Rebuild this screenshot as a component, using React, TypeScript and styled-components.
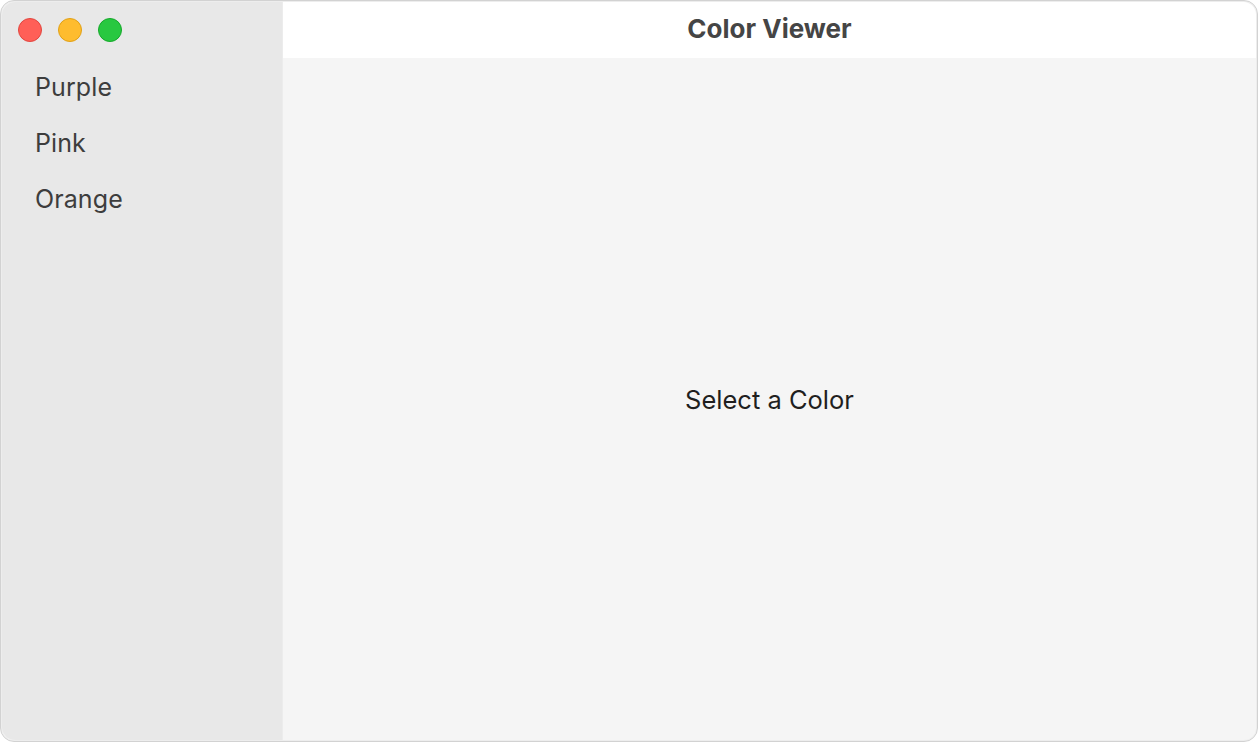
import React from "react";
import styled, { createGlobalStyle } from "styled-components";

const Global = createGlobalStyle`
  html, body { margin: 0; padding: 0; background: #ffffff; }
  body { font-family: Inter, "Noto Sans", sans-serif; }
`;

const Window = styled.div`
  width: 1258px;
  height: 742px;
  box-sizing: border-box;
  border: 1px solid #d2d2d2;
  border-radius: 14px;
  overflow: hidden;
  display: flex;
  background: #f5f5f5;
  box-shadow: inset 0 0 0 1px #ededed;
`;

const Sidebar = styled.aside`
  width: 280px;
  flex: none;
  background: #e8e8e8;
  border-right: 1px solid #ececec;
  display: flex;
  flex-direction: column;
  margin: 1px 0 1px 1px;
  border-radius: 13px 0 0 13px;
`;

const TrafficLights = styled.div`
  display: flex;
  gap: 16px;
  padding: 16px 0 0 16px;
  height: 40px;
  box-sizing: border-box;
`;

const Light = styled.span<{ $fill: string; $ring: string }>`
  width: 24px;
  height: 24px;
  border-radius: 50%;
  background: ${(p) => p.$fill};
  box-sizing: border-box;
  border: 1px solid ${(p) => p.$ring};
`;

const NavList = styled.ul`
  list-style: none;
  margin: 0;
  padding: 17px 0 0 0;
  display: flex;
  flex-direction: column;
`;

const NavItem = styled.li`
  height: 56px;
  display: flex;
  align-items: center;
  padding-left: 33px;
  font-size: 25px;
  letter-spacing: 0.1px;
  color: #3d3d3d;
`;

const Main = styled.main`
  flex: 1;
  display: flex;
  flex-direction: column;
  margin: 1px 1px 1px 0;
`;

const TitleBar = styled.header`
  height: 56px;
  flex: none;
  background: #ffffff;
  display: flex;
  align-items: center;
  justify-content: center;
  font-weight: 700;
  font-size: 26px;
  color: #454545;
  padding-bottom: 3px;
  box-sizing: border-box;
  border-top-right-radius: 13px;
`;

const Content = styled.section`
  flex: 1;
  display: flex;
  align-items: center;
  justify-content: center;
  font-size: 25.5px;
  color: #1f1f1f;
  padding-top: 1px;
`;

export default function App() {
  return (
    <>
      <Global />
      <Window>
        <Sidebar>
          <TrafficLights>
            <Light $fill="#ff5f57" $ring="#e2463f" />
            <Light $fill="#febc2e" $ring="#e1a116" />
            <Light $fill="#28c840" $ring="#15a92a" />
          </TrafficLights>
          <NavList>
            <NavItem>Purple</NavItem>
            <NavItem>Pink</NavItem>
            <NavItem>Orange</NavItem>
          </NavList>
        </Sidebar>
        <Main>
          <TitleBar>Color Viewer</TitleBar>
          <Content>Select a Color</Content>
        </Main>
      </Window>
    </>
  );
}
